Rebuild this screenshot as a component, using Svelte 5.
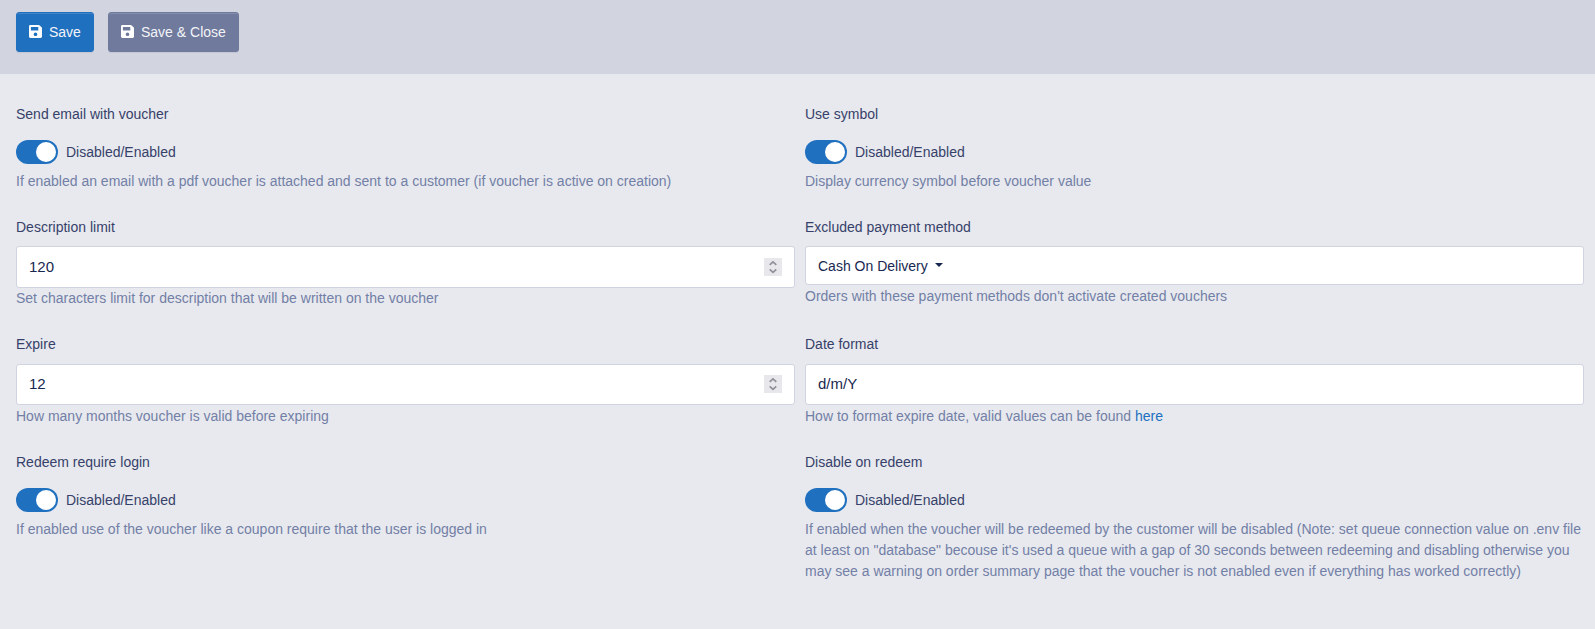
<script>
  const fields = [
    { label: 'Send email with voucher', type: 'toggle', help: 'If enabled an email with a pdf voucher is attached and sent to a customer (if voucher is active on creation)' },
    { label: 'Use symbol', type: 'toggle', help: 'Display currency symbol before voucher value' },
    { label: 'Description limit', type: 'number', value: '120', help: 'Set characters limit for description that will be written on the voucher' },
    { label: 'Excluded payment method', type: 'select', value: 'Cash On Delivery', help: "Orders with these payment methods don't activate created vouchers" },
    { label: 'Expire', type: 'number', value: '12', help: 'How many months voucher is valid before expiring' },
    { label: 'Date format', type: 'text', value: 'd/m/Y', help: 'How to format expire date, valid values can be found ', link: 'here' },
    { label: 'Redeem require login', type: 'toggle', help: 'If enabled use of the voucher like a coupon require that the user is logged in' },
    { label: 'Disable on redeem', type: 'toggle', help: 'If enabled when the voucher will be redeemed by the customer will be disabled (Note: set queue connection value on .env file at least on "database" becouse it\'s used a queue with a gap of 30 seconds between redeeming and disabling otherwise you may see a warning on order summary page that the voucher is not enabled even if everything has worked correctly)' }
  ];
</script>

{#snippet disk()}
  <svg class="disk" viewBox="0 0 13 13" aria-hidden="true">
    <path fill="#fff" fill-rule="evenodd" d="M1.4 0H9.7Q10.3 0 10.7 .4L12.6 2.3Q13 2.7 13 3.3V11.6Q13 13 11.6 13H1.4Q0 13 0 11.6V1.4Q0 0 1.4 0ZM2.2 1.9Q1.9 1.9 1.9 2.2V5.3Q1.9 5.6 2.2 5.6H9Q9.3 5.6 9.3 5.3V2.2Q9.3 1.9 9 1.9ZM6.5 7.4A1.85 1.85 0 1 0 6.5 11.1A1.85 1.85 0 1 0 6.5 7.4Z" />
  </svg>
{/snippet}

<header>
  <button class="primary">{@render disk()}Save</button>
  <button class="secondary">{@render disk()}Save &amp; Close</button>
</header>

<main>
  {#each fields as f}
    <section class={f.type}>
      <div class="label">{f.label}</div>
      {#if f.type === 'toggle'}
        <div class="switch"><span class="track"><span class="knob"></span></span>Disabled/Enabled</div>
      {:else}
        <div class="control">
          <span>{f.value}</span>
          {#if f.type === 'select'}<i class="caret"></i>{/if}
          {#if f.type === 'number'}
            <svg class="spin" viewBox="0 0 18 18" aria-hidden="true">
              <rect width="18" height="18" fill="#e8e8ec" />
              <path d="M5.7 6.9 9 3.8l3.3 3.1M5.7 11.3 9 14.4l3.3-3.1" fill="none" stroke="#90909b" stroke-width="1.7" />
            </svg>
          {/if}
        </div>
      {/if}
      <div class="help">{f.help}{#if f.link}<a href="#top">{f.link}</a>{/if}</div>
    </section>
  {/each}
</main>

<style>
  :global(body) {
    background: #e8e9ee;
    font: 14px/21px "Liberation Sans", Arial, sans-serif;
    color: #36416a;
  }
  header {
    box-sizing: border-box;
    height: 74px;
    padding: 12px 16px;
    display: flex;
    align-items: flex-start;
    gap: 14px;
    background: #d2d4df;
  }
  button {
    box-sizing: border-box;
    height: 40px;
    padding: 0 12px;
    border: 1px solid;
    border-radius: 3px;
    display: flex;
    align-items: center;
    font: inherit;
    white-space: nowrap;
    color: #f3f4f8;
    box-shadow: inset 0 1px 0 rgba(255, 255, 255, 0.15), 0 1px 1px rgba(24, 36, 75, 0.075);
  }
  .primary { width: 78px; background: #2070c0; border-color: #2070c0; }
  .secondary { width: 131px; background: #6f7a9d; border-color: #6f7a9d; }
  .disk { width: 13px; height: 13px; margin: 0 7px 1px 0; flex: none; }
  main {
    box-sizing: border-box;
    padding: 30px 11px 0 16px;
    display: grid;
    grid-template-columns: 779px 779px;
    column-gap: 10px;
    grid-template-rows: 113px 117.4px 117.7px auto;
  }
  .label { height: 21px; }
  .switch {
    height: 24px;
    margin-top: 15px;
    display: flex;
    align-items: center;
    gap: 8px;
  }
  .track {
    box-sizing: border-box;
    width: 42px;
    height: 24px;
    padding: 2px;
    border-radius: 12px;
    display: flex;
    justify-content: flex-end;
    background: #2070c0;
  }
  .knob { width: 20px; height: 20px; border-radius: 50%; background: #fff; }
  .toggle .help { margin-top: 7px; }
  .control {
    box-sizing: border-box;
    height: 41.5px;
    margin-top: 8.3px;
    margin-bottom: 0.4px;
    padding: 0 12px 1px;
    border: 1px solid #d0d3e0;
    border-radius: 3px;
    background: #fff;
    color: #182850;
    display: flex;
    align-items: center;
    font-size: 15px;
  }
  .select .control { height: 39px; padding-top: 1px; padding-bottom: 0; font-size: 14px; }
  .caret {
    margin-left: 7px;
    margin-bottom: 3px;
    border: 4px solid transparent;
    border-top-color: #182850;
    border-bottom: 0;
  }
  .spin { width: 18px; height: 18px; margin-left: auto; }
  .help { color: #727fa6; }
  a { color: #2070c0; text-decoration: none; }
</style>
